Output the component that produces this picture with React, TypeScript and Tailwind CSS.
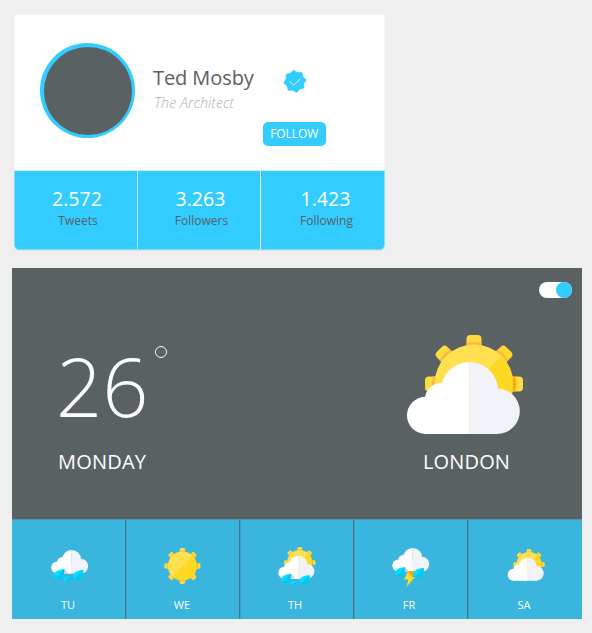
import type { ReactNode } from 'react';

const BigCloud = ({ seam = '#cfe9f3' }: { seam?: string }) => (
  <>
    <g fill="#ffffff">
      <circle cx="425.6" cy="415.4" r="18.6" />
      <circle cx="441" cy="399" r="16" />
      <path d="M469.5 362A29 29 0 0 0 440.5 391V434H469.5Z" />
      <path d="M425.6 434V405H469.5V434Z" />
    </g>
    <g fill="#f2f3f9">
      <path d="M469.3 362A29 29 0 0 1 498.3 391V434H469.3Z" />
      <circle cx="497" cy="411.2" r="22.8" />
    </g>
    <path d="M469.4 362V434" stroke={seam} strokeWidth=".8" />
  </>
);

const angles = [0, 45, 90, 135, 180, 225, 270, 315];

const Sun = ({ id }: { id: string }) => (
  <>
    <defs>
      <linearGradient id={id} gradientUnits="userSpaceOnUse" x1="424" y1="334" x2="524" y2="434">
        <stop offset="0.5" stopColor="#ffe04f" />
        <stop offset="0.5" stopColor="#fdd923" />
      </linearGradient>
    </defs>
    {angles.map((a) => (
      <g key={a} transform={`rotate(${a} 474 384)`}>
        <rect x="466.5" y="335" width="15" height="17" rx="4" fill={a === 45 ? '#fdd92e' : '#fedb3f'} />
        <path
          d="M466.5 342.8Q474 341 481.5 342.8V346H466.5Z"
          fill={a === 90 ? '#ffa412' : '#fdb93e'}
        />
      </g>
    ))}
    <circle cx="474" cy="384" r="39.5" fill={`url(#${id})`} />
  </>
);

const Drop = ({ x, y, s = 1 }: { x: number; y: number; s?: number }) => (
  <g transform={`translate(${x} ${y}) scale(${s})`}>
    <path d="M10 0C6 .4 0 1.5 0 6C0 8.5 2 10.4 4.6 10.4C9 10.4 10 5 10 0Z" fill="#00e1ff" />
    <path d="M10 0L1.2 8.7C2 9.7 3.2 10.4 4.6 10.4C9 10.4 10 5 10 0Z" fill="#00c8f4" />
  </g>
);

const Icon = ({ children }: { children: ReactNode }) => (
  <svg className="block h-[48px] w-[48px]" viewBox="0 0 48 48">
    {children}
  </svg>
);

const RainIcon = () => (
  <Icon>
    <g transform="translate(6.2 7) scale(.3275) translate(-407 -362)">
      <BigCloud />
    </g>
    <path d="M19 26.3L23.8 31H17Z" fill="#d0d0d0" />
    <Drop x={9.3} y={26} />
    <Drop x={19} y={32.7} s={0.62} />
    <Drop x={28.3} y={26.7} />
  </Icon>
);

const SunIcon = () => (
  <Icon>
    <g transform="translate(23.4 23) scale(.367) translate(-474 -384)">
      <Sun id="sun-we" />
    </g>
  </Icon>
);

const SunRainIcon = () => (
  <Icon>
    <g transform="translate(5.3 4) scale(.32) translate(-407 -335)">
      <Sun id="sun-th" />
      <BigCloud seam="#f2f3f9" />
    </g>
    <path d="M18.5 30.7L22 35.6H16Z" fill="#d0d0d0" />
    <Drop x={8.5} y={30.7} s={0.95} />
    <Drop x={18} y={37.3} s={0.58} />
    <Drop x={27.3} y={32} s={0.92} />
  </Icon>
);

const StormIcon = () => (
  <Icon>
    <g transform="translate(5.3 5) scale(.3275) translate(-407 -362)">
      <BigCloud />
    </g>
    <path d="M18.2 24.3L22.5 29H16Z" fill="#d0d0d0" />
    <path d="M20.8 28.3H27.8L24.8 34H28L19.5 44L21.3 36.5H17.3Z" fill="#fdd923" />
    <path d="M20.5 28.3H27.8L25.2 33Z" fill="#fb9d10" />
    <Drop x={8.2} y={24} s={0.98} />
    <Drop x={26.8} y={24.8} />
  </Icon>
);

const CloudSunIcon = () => (
  <Icon>
    <g transform="translate(6.6 6) scale(.32) translate(-407 -335)">
      <Sun id="sun-sa" />
      <BigCloud seam="#f2f3f9" />
    </g>
  </Icon>
);

/* Eight-pointed seal, tilted slightly to the left. */
const badgePoints = Array.from({ length: 16 }, (_, i) => {
  const r = i % 2 === 0 ? 11.3 : 9.2;
  const a = ((i * 22.5 - 98) * Math.PI) / 180;
  return `${(12 + r * Math.cos(a)).toFixed(2)},${(12 + r * Math.sin(a)).toFixed(2)}`;
}).join(' ');

const Stat = ({ value, label, className }: { value: string; label: string; className: string }) => (
  <div className={`flex flex-col items-center pt-[14px] ${className}`}>
    <div className="text-[19.6px] leading-[27px] text-white">{value}</div>
    <div className="mt-[1px] ml-[2px] text-[12px] leading-[16px] text-[#596163]">{label}</div>
  </div>
);

const Day = ({ name, labelClass = 'mr-[1px]', children }: { name: string; labelClass?: string; children: ReactNode }) => (
  <div className="flex w-[114px] flex-col items-center border-r border-[#4c7486] pt-[23px] shadow-[inset_1px_0_0_#40a2c3] first:shadow-none last:border-r-0">
    {children}
    <div className={`mt-[6px] text-[11px] leading-[15px] text-white ${labelClass}`}>{name}</div>
  </div>
);

export default function App() {
  return (
    <div className="h-[633px] w-[592px] overflow-hidden bg-[#efefef] pt-[14px] pl-[12px] font-['Open_Sans',sans-serif]">
      <section className="ml-[2px] flex h-[236px] w-[371px] flex-col overflow-hidden rounded-[5px] bg-white shadow-[0_1px_1px_rgba(0,0,0,0.07)]">
        <div className="flex h-[156px] shrink-0 border-x border-t border-[#f7f7f7]">
          <div className="mt-[28px] ml-[25px] h-[95px] w-[95px] shrink-0 rounded-full bg-[#33ccff] p-[3.5px]">
            <div className="h-[88px] w-[88px] rounded-full bg-[#596163]" />
          </div>
          <div className="mt-[49px] ml-[18px] w-[110px] shrink-0">
            <h1 className="text-[20px] leading-[28px] tracking-[-0.08px] whitespace-nowrap text-[#596163]">
              Ted Mosby
            </h1>
            <p className="ml-[1px] text-[14.4px] leading-[22px] font-light whitespace-nowrap text-[#aab2b2] italic">
              The Architect
            </p>
          </div>
          <div className="-ml-[0.5px] flex flex-col">
            <svg className="mt-[54px] ml-[20px] h-[24px] w-[24px]" viewBox="0 -0.3 24 24">
              <polygon points={badgePoints} fill="#33ccff" stroke="#33ccff" strokeWidth=".6" strokeLinejoin="round" />
              <path d="M6.5 12L10.8 16L17.5 9.4" fill="none" stroke="#fff" strokeWidth=".8" />
            </svg>
            <button className="mt-[29px] h-[24px] w-[63.5px] rounded-[5px] bg-[#33ccff] text-[12px] leading-[24px] tracking-[-0.05px] text-white">
              FOLLOW
            </button>
          </div>
        </div>
        <div className="flex flex-1 rounded-b-[5px] border border-t-[#c9f0fc] border-r-[#8fdcf6] border-b-[#7fdaf8] border-l-[#8fdcf6] bg-[#33ccff]">
          <Stat className="w-[123px] border-r border-[#c2f0ff] pl-[2px]" value="2.572" label="Tweets" />
          <Stat className="w-[123px] border-r border-white pl-[3px]" value="3.263" label="Followers" />
          <Stat className="w-[123px] pl-[6px]" value="1.423" label="Following" />
        </div>
      </section>

      <section className="mt-[18px] w-[570px]">
        <div className="flex h-[251px] justify-between bg-[#596163]">
          <div className="ml-[46px] pt-[73px]">
            <div className="flex h-[100px]">
              <span className="-mt-[5px] -ml-[2px] text-[81px] leading-[100px] font-light text-white">26</span>
              <span className="mt-[5px] ml-[7px] h-[12px] w-[12px] rounded-full border border-white" />
            </div>
            <div className="mt-[7px] text-[20px] leading-[28px] tracking-[0.2px] text-white">MONDAY</div>
          </div>
          <div className="flex w-[180px] flex-col">
            <div className="mt-[13.5px] mr-[10px] h-[16.5px] w-[33px] self-end rounded-full bg-white">
              <div className="ml-auto h-[16.5px] w-[16.5px] rounded-full bg-[#33ccff]" />
            </div>
            <svg className="mt-[32px] h-[110px] w-[130px]" viewBox="402 330 130 110">
              <Sun id="sun-main" />
              <BigCloud seam="#fbefcf" />
            </svg>
            <div className="mt-[8px] ml-[21px] text-[20px] leading-[28px] tracking-[0.15px] text-white">
              LONDON
            </div>
          </div>
        </div>
        <div className="flex h-[100px] border-t border-[#489ab6] bg-[#3ab5de]">
          <Day name="TU">
            <RainIcon />
          </Day>
          <Day name="WE">
            <SunIcon />
          </Day>
          <Day name="TH" labelClass="mr-[3px]">
            <SunRainIcon />
          </Day>
          <Day name="FR" labelClass="mr-[3px]">
            <StormIcon />
          </Day>
          <Day name="SA" labelClass="mr-[2px]">
            <CloudSunIcon />
          </Day>
        </div>
      </section>
    </div>
  );
}
